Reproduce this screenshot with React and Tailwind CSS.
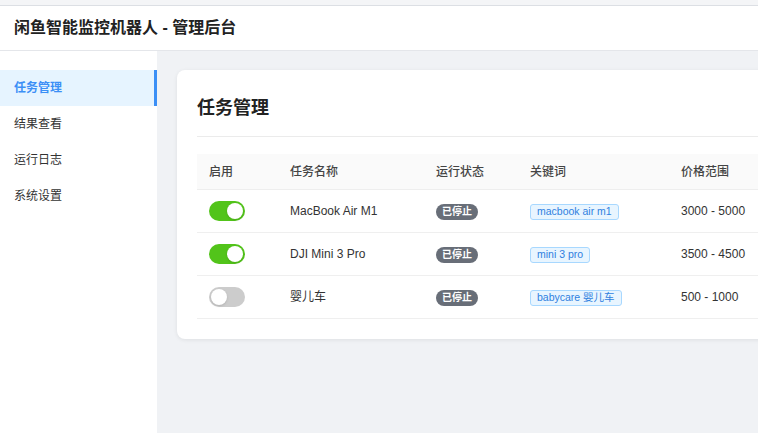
import React from 'react'

const tasks = [
  { enabled: true, name: 'MacBook Air M1', status: '已停止', keyword: 'macbook air m1', price: '3000 - 5000' },
  { enabled: true, name: 'DJI Mini 3 Pro', status: '已停止', keyword: 'mini 3 pro', price: '3500 - 4500' },
  { enabled: false, name: '婴儿车', status: '已停止', keyword: 'babycare 婴儿车', price: '500 - 1000' },
]

const menu = ['任务管理', '结果查看', '运行日志', '系统设置']

function Toggle({ on }) {
  return (
    <div className={'relative h-5 w-9 rounded-full ' + (on ? 'bg-[#52c41a]' : 'bg-[#cccccc]')}>
      <div
        className={
          'absolute top-[2px] h-4 w-4 rounded-full bg-white shadow-sm ' + (on ? 'left-[18px]' : 'left-[2px]')
        }
      />
    </div>
  )
}

const cols = 'grid grid-cols-[81px_146px_94px_151px_1fr] items-center'

export default function App() {
  return (
    <div
      className="flex h-[433px] w-[758px] flex-col overflow-hidden bg-white text-[#333]"
      style={{ fontFamily: '"Liberation Sans", "Noto Sans CJK SC", sans-serif' }}
    >
      <div className="h-[6px] border-b border-[#dcdfe4] bg-[#f4f5f7]" />
      <header className="flex h-[45px] items-center border-b border-[#e4e6ea] px-[14px]">
        <h1 className="text-[16px] font-semibold text-[#222]">闲鱼智能监控机器人 - 管理后台</h1>
      </header>

      <div className="flex flex-1 overflow-hidden">
        <aside className="w-[157px] shrink-0 bg-white pt-[19px]">
          {menu.map((m, i) => (
            <div
              key={m}
              className={
                'flex h-9 items-center px-[14px] text-[12px] ' +
                (i === 0
                  ? 'border-r-[3px] border-[#3b8ff6] bg-[#e6f4ff] font-semibold text-[#3b8ff6]'
                  : 'text-[#333]')
              }
            >
              {m}
            </div>
          ))}
        </aside>

        <main className="flex-1 overflow-hidden bg-[#f0f2f5] pl-5 pt-[19px]">
          <div className="w-[720px] rounded-lg bg-white px-5 pb-5 pt-5 shadow-[0_1px_4px_rgba(0,0,0,0.08)]">
            <h2 className="border-b border-[#ebebeb] pb-[14px] pt-[4px] text-[18px] font-semibold leading-[28px] text-[#222]">
              任务管理
            </h2>

            <div className="mt-[17px]">
              <div className={cols + ' h-9 border-b border-[#eeeeee] bg-[#fafafa] text-[12px] font-medium text-[#444]'}>
                <div className="pl-3">启用</div>
                <div className="pl-3">任务名称</div>
                <div className="pl-3">运行状态</div>
                <div className="pl-3">关键词</div>
                <div className="pl-3">价格范围</div>
              </div>
              {tasks.map((t) => (
                <div key={t.name} className={cols + ' h-[43px] border-b border-[#efefef] text-[12px] text-[#333]'}>
                  <div className="pl-3">
                    <Toggle on={t.enabled} />
                  </div>
                  <div className="pl-3">{t.name}</div>
                  <div className="pl-3">
                    <span className="inline-flex h-[16px] items-center rounded-full bg-[#686e78] px-[6px] text-[10px] font-bold text-white">
                      {t.status}
                    </span>
                  </div>
                  <div className="pl-3">
                    <span className="inline-flex h-[16px] items-center rounded-[3px] border border-[#a8d8ff] bg-[#e8f5ff] px-[6px] text-[10.5px] text-[#2f7fe0]">
                      {t.keyword}
                    </span>
                  </div>
                  <div className="pl-3">{t.price}</div>
                </div>
              ))}
            </div>
          </div>
        </main>
      </div>
    </div>
  )
}
